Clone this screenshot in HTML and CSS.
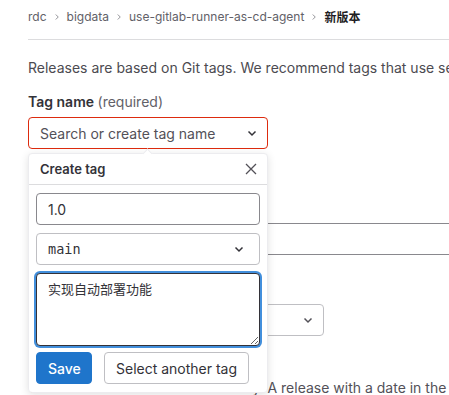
FILE: index.html
```html
<!DOCTYPE html>
<html lang="zh-CN">
<head>
  <meta charset="UTF-8">
  <meta name="viewport" content="width=device-width, initial-scale=1.0">
  <title>新版本</title>
  <link rel="stylesheet" href="styles.css">
</head>
<body>
  <div class="page">
    <nav class="breadcrumbs">
      <span class="crumb">rdc</span>
      <svg class="sep" viewBox="0 0 16 16"><path d="M6 4l4 4-4 4"/></svg>
      <span class="crumb">bigdata</span>
      <svg class="sep" viewBox="0 0 16 16"><path d="M6 4l4 4-4 4"/></svg>
      <span class="crumb">use-gitlab-runner-as-cd-agent</span>
      <svg class="sep" viewBox="0 0 16 16"><path d="M6 4l4 4-4 4"/></svg>
      <span class="crumb current">新版本</span>
    </nav>

    <div class="content">
      <p class="intro">Releases are based on Git tags. We recommend tags that use semantic versioning, for example v1.0.0.</p>

      <div class="field field-tag">
        <label class="label">Tag name <span class="hint">(required)</span></label>
        <div class="tag-select">
          <button class="dropdown-toggle invalid">
            <span>Search or create tag name</span>
            <svg class="chevron" viewBox="0 0 16 16"><path d="M4.5 6.5l3.5 3.5 3.5-3.5"/></svg>
          </button>

          <div class="popover">
            <div class="popover-header">
              <span>Create tag</span>
              <svg class="close" viewBox="0 0 16 16"><path d="M3 3l10 10M13 3L3 13"/></svg>
            </div>
            <div class="popover-body">
              <input class="form-input" type="text" value="1.0">
              <div class="form-select">
                <span>main</span>
                <svg class="chevron" viewBox="0 0 16 16"><path d="M4.5 6.5l3.5 3.5 3.5-3.5"/></svg>
              </div>
              <textarea class="form-textarea">实现自动部署功能</textarea>
              <div class="actions">
                <button class="btn btn-primary">Save</button>
                <button class="btn">Select another tag</button>
              </div>
            </div>
          </div>
        </div>
      </div>

      <div class="field field-title">
        <label class="label">Release title</label>
        <input class="wide-input" type="text">
      </div>

      <div class="field field-milestone">
        <label class="label">Milestones</label>
        <div class="milestone-select">
          <svg class="chevron" viewBox="0 0 16 16"><path d="M4.5 6.5l3.5 3.5 3.5-3.5"/></svg>
        </div>
      </div>

      <p class="help">The date when the release is ready. A release with a date in the future is labeled as an Upcoming Release.</p>
    </div>
  </div>
</body>
</html>
```

FILE: styles.css
```css
html {
  overflow: hidden;
}

body {
  margin: 0;
  background-color: #ffffff;
  font-family: Inter, "Noto Sans CJK SC", sans-serif;
  color: #333238;
  font-size: 14px;
}

.page {
  width: 760px;
  padding-left: 28px;
}

.breadcrumbs {
  display: flex;
  align-items: center;
  gap: 5px;
  box-sizing: border-box;
  height: 40px;
  padding-bottom: 6px;
  font-size: 12px;
  color: #626168;
  border-bottom: 1px solid #dcdcde;
}

.breadcrumbs .sep {
  width: 10px;
  height: 10px;
  fill: none;
  stroke: #8c8b91;
  stroke-width: 1.5;
}

.crumb.current {
  color: #1f1e24;
  font-weight: 600;
}

.content {
  padding-top: 18px;
}

.intro {
  margin: 0;
  line-height: 20px;
  color: #4c4b51;
  white-space: nowrap;
}

.field {
  display: flex;
  flex-direction: column;
}

.label {
  line-height: 20px;
  font-weight: 600;
  margin-bottom: 5px;
}

.label .hint {
  font-weight: 400;
  color: #626168;
}

.field-tag {
  margin-top: 14px;
}

.tag-select {
  position: relative;
  width: 240px;
}

.dropdown-toggle {
  display: flex;
  align-items: center;
  justify-content: space-between;
  box-sizing: border-box;
  width: 240px;
  height: 32px;
  padding: 0 7px 0 11px;
  background: #ffffff;
  border: 1px solid #dd2b0e;
  border-radius: 4px;
  font-family: inherit;
  font-size: 14px;
  color: #535158;
}

.chevron {
  width: 16px;
  height: 16px;
  fill: none;
  stroke: #333238;
  stroke-width: 1.5;
}

.popover {
  position: absolute;
  top: 36px;
  left: 0;
  z-index: 10;
  box-sizing: border-box;
  width: 240px;
  height: 240px;
  background: #ffffff;
  border: 1px solid #ececef;
  border-radius: 4px;
  box-shadow: 0 2px 8px rgba(0, 0, 0, 0.12);
}

.popover::before {
  content: "";
  position: absolute;
  top: -4px;
  left: 115px;
  width: 6px;
  height: 6px;
  background: #ffffff;
  border-left: 1px solid #ececef;
  border-top: 1px solid #ececef;
  transform: rotate(45deg);
}

.popover-header {
  display: flex;
  align-items: center;
  justify-content: space-between;
  height: 30px;
  padding: 0 8px 0 11px;
  border-bottom: 1px solid #dcdcde;
  font-size: 13px;
  font-weight: 600;
  color: #333238;
}

.close {
  width: 16px;
  height: 16px;
  fill: none;
  stroke: #535158;
  stroke-width: 1.3;
}

.popover-body {
  display: flex;
  flex-direction: column;
  gap: 8px;
  padding: 8px 7px 7px;
}

.form-input,
.form-select,
.form-textarea {
  box-sizing: border-box;
  width: 224px;
  border: 1px solid #bfbfc3;
  border-radius: 4px;
  background: #ffffff;
  color: #333238;
  font-size: 14px;
}

.form-input {
  height: 32px;
  padding: 0 11px;
  font-family: inherit;
  border-color: #89888d;
}

.form-select {
  display: flex;
  align-items: center;
  justify-content: space-between;
  height: 32px;
  padding: 0 12px 0 11px;
  font-family: "DejaVu Sans Mono", monospace;
  font-size: 13.5px;
}

.form-textarea {
  height: 73px;
  padding: 6px 11px;
  margin-bottom: -2px;
  border-color: #333238;
  box-shadow: 0 0 0 2px #428fdc;
  font-family: Inter, "Noto Sans CJK SC", sans-serif;
  font-size: 13px;
  line-height: 18px;
  resize: vertical;
  outline: none;
}

.actions {
  display: flex;
  gap: 12px;
}

.btn {
  box-sizing: border-box;
  height: 32px;
  padding: 0 11px;
  background: #ffffff;
  border: 1px solid #bfbfc3;
  border-radius: 4px;
  font-family: inherit;
  font-size: 14px;
  color: #333238;
}

.btn-primary {
  width: 56px;
  background: #1f75cb;
  border-color: #1f75cb;
  color: #ffffff;
  font-weight: 500;
}

.field-title {
  margin-top: 49px;
}

.wide-input {
  box-sizing: border-box;
  width: 700px;
  height: 32px;
  border: 1px solid #89888d;
  border-radius: 4px;
}

.field-milestone {
  margin-top: 24px;
}

.milestone-select {
  display: flex;
  align-items: center;
  justify-content: flex-end;
  box-sizing: border-box;
  width: 296px;
  height: 32px;
  padding-right: 7px;
  border: 1px solid #bfbfc3;
  border-radius: 4px;
}

.milestone-select .chevron {
  stroke: #535158;
}

.help {
  margin: 42px 0 0;
  line-height: 20px;
  color: #535158;
  white-space: nowrap;
}
```
